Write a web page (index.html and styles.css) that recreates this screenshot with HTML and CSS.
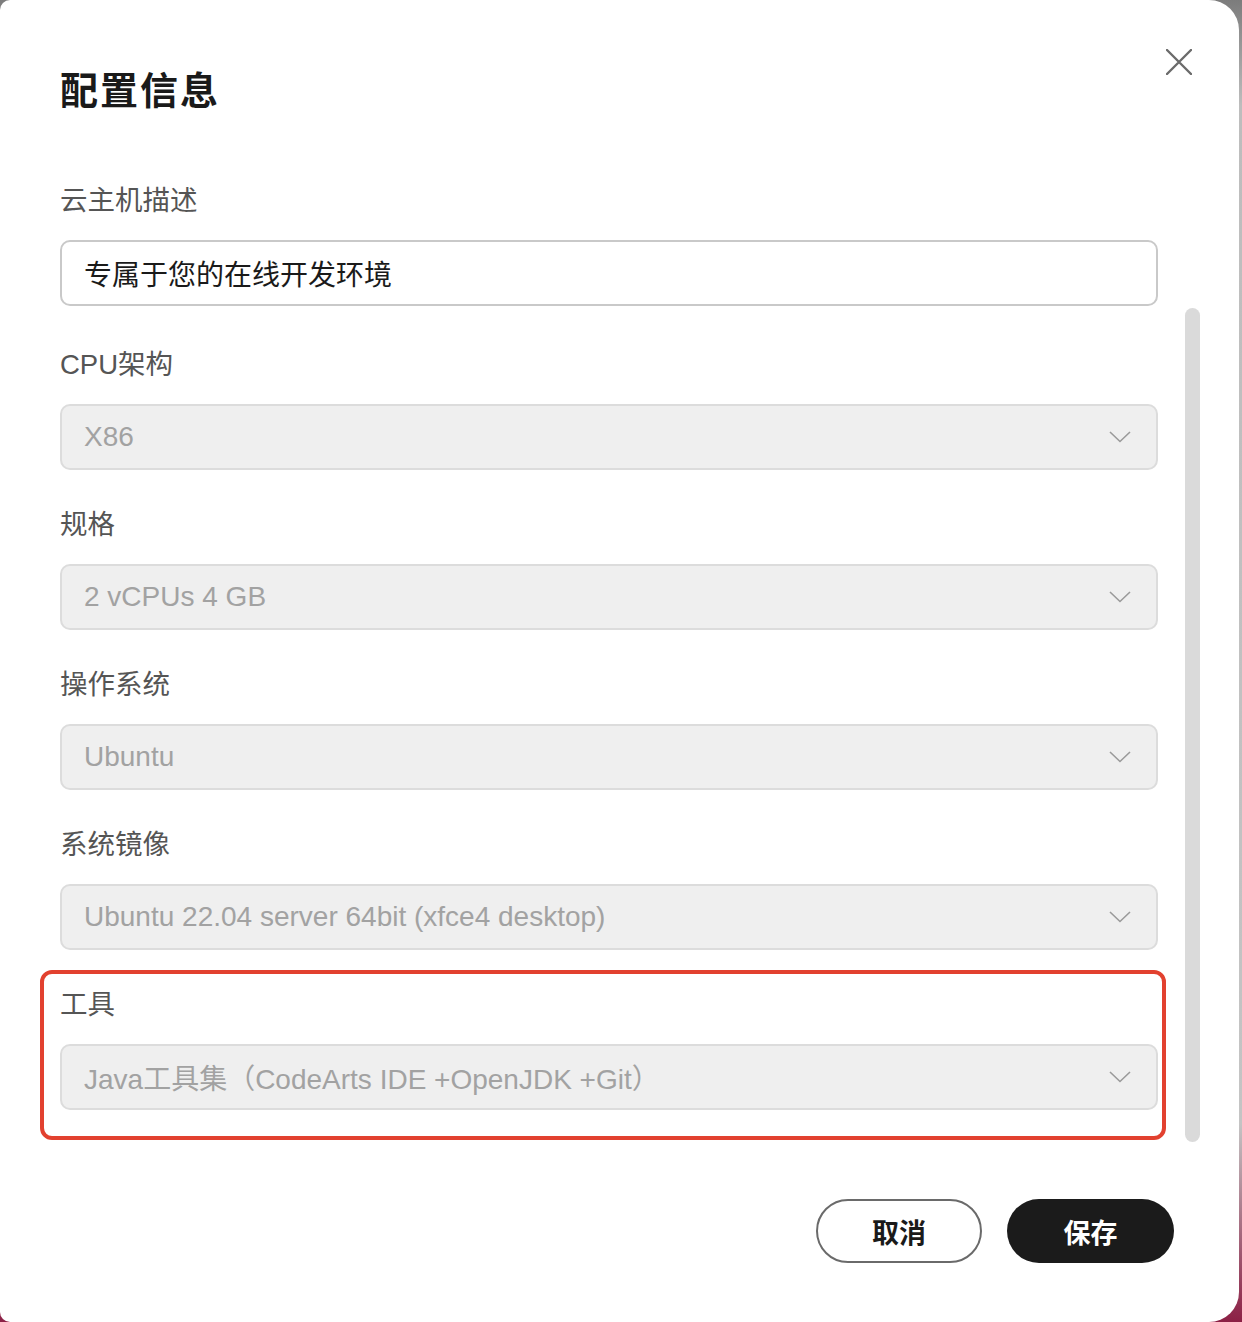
FILE: index.html
```html
<!DOCTYPE html>
<html lang="zh-CN">
<head>
<meta charset="utf-8">
<title>配置信息</title>
<link rel="stylesheet" href="styles.css">
</head>
<body>
<div class="modal">
  <div class="header">
    <h1 class="title">配置信息</h1>
    <button class="close" aria-label="关闭">
      <svg width="26" height="26" viewBox="0 0 26 26"><path d="M1 1 L25 25 M25 1 L1 25" stroke="#6b6b6b" stroke-width="2.4" fill="none" stroke-linecap="round"/></svg>
    </button>
  </div>
  <div class="body">
    <div class="form">
      <div class="field">
        <div class="label">云主机描述</div>
        <div class="input">专属于您的在线开发环境</div>
      </div>
      <div class="field field-after-input">
        <div class="label">CPU架构</div>
        <div class="select"><span>X86</span><svg class="chev" width="22" height="12" viewBox="0 0 22 12"><path d="M1 1 L11 10.5 L21 1" stroke="#9a9a9a" stroke-width="1.6" fill="none"/></svg></div>
      </div>
      <div class="field">
        <div class="label">规格</div>
        <div class="select"><span>2 vCPUs 4 GB</span><svg class="chev" width="22" height="12" viewBox="0 0 22 12"><path d="M1 1 L11 10.5 L21 1" stroke="#9a9a9a" stroke-width="1.6" fill="none"/></svg></div>
      </div>
      <div class="field">
        <div class="label">操作系统</div>
        <div class="select"><span>Ubuntu</span><svg class="chev" width="22" height="12" viewBox="0 0 22 12"><path d="M1 1 L11 10.5 L21 1" stroke="#9a9a9a" stroke-width="1.6" fill="none"/></svg></div>
      </div>
      <div class="field">
        <div class="label">系统镜像</div>
        <div class="select"><span>Ubuntu 22.04 server 64bit (xfce4 desktop)</span><svg class="chev" width="22" height="12" viewBox="0 0 22 12"><path d="M1 1 L11 10.5 L21 1" stroke="#9a9a9a" stroke-width="1.6" fill="none"/></svg></div>
      </div>
      <div class="highlight">
        <div class="label">工具</div>
        <div class="select"><span>Java工具集（CodeArts IDE +OpenJDK +Git）</span><svg class="chev" width="22" height="12" viewBox="0 0 22 12"><path d="M1 1 L11 10.5 L21 1" stroke="#9a9a9a" stroke-width="1.6" fill="none"/></svg></div>
      </div>
    </div>
    <div class="scrollbar"></div>
  </div>
  <div class="footer">
    <button class="btn btn-cancel">取消</button>
    <button class="btn btn-save">保存</button>
  </div>
</div>
</body>
</html>
```
FILE: styles.css
```css
html, body {
  margin: 0;
  padding: 0;
}
body {
  width: 1242px;
  height: 1322px;
  overflow: hidden;
  background: linear-gradient(to bottom, #7c7c7c 0%, #bdbdbd 8%, #c4c4c4 85%, #8c2045 100%);
  font-family: "Liberation Sans", "Noto Sans CJK SC", sans-serif;
}
.modal {
  width: 1239px;
  height: 1322px;
  box-sizing: border-box;
  background: #ffffff;
  border-radius: 10px 30px 30px 10px;
  padding-left: 60px;
}
.header {
  display: flex;
  justify-content: space-between;
  align-items: flex-start;
}
.title {
  margin: 65px 0 0 0;
  font-size: 38px;
  line-height: 52px;
  font-weight: 700;
  color: #1a1a1a;
  letter-spacing: 2px;
}
.close {
  margin: 49px 47px 0 0;
  padding: 0;
  width: 26px;
  height: 26px;
  border: none;
  background: none;
  display: flex;
}
.body {
  display: flex;
  align-items: flex-start;
  margin-top: 64px;
}
.form {
  width: 1098px;
  display: flex;
  flex-direction: column;
}
.field {
  margin-top: 35px;
}
.field:first-child {
  margin-top: 0;
}
.field-after-input {
  margin-top: 39px;
}
.label {
  font-size: 27.5px;
  line-height: 40px;
  color: #555555;
  margin-bottom: 19px;
}
.input {
  height: 66px;
  box-sizing: border-box;
  border: 2px solid #c9c9c9;
  border-radius: 10px;
  padding-left: 22px;
  display: flex;
  align-items: center;
  font-size: 28px;
  color: #1a1a1a;
}
.select {
  height: 66px;
  box-sizing: border-box;
  border: 2px solid #dcdcdc;
  background: #efefef;
  border-radius: 10px;
  padding: 0 25px 0 22px;
  display: flex;
  align-items: center;
  justify-content: space-between;
  font-size: 28px;
  color: #a2a2a2;
}
.chev {
  display: block;
}
.highlight {
  margin: 20px -8px 0 -20px;
  padding: 11px 4px 26px 16px;
  border: 4px solid #e2412f;
  border-radius: 12px;
}
.scrollbar {
  width: 15px;
  height: 834px;
  margin-left: 27px;
  margin-top: 127px;
  background: #dadada;
  border-radius: 8px;
}
.footer {
  display: flex;
  justify-content: flex-end;
  gap: 25px;
  margin-top: 57px;
  margin-right: 65px;
}
.btn {
  height: 64px;
  border-radius: 32px;
  font-family: "Liberation Sans", "Noto Sans CJK SC", sans-serif;
  font-size: 27px;
  font-weight: 700;
  box-sizing: border-box;
  padding: 0;
}
.btn-cancel {
  width: 166px;
  border: 2px solid #6a6a6a;
  background: #ffffff;
  color: #1a1a1a;
}
.btn-save {
  width: 167px;
  border: none;
  background: #1b1b1b;
  color: #ffffff;
}
```
